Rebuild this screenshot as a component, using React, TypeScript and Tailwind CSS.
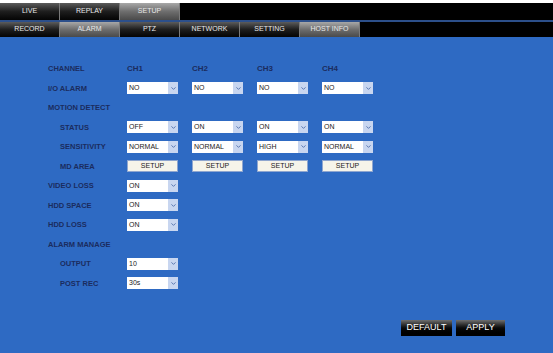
import { ChevronDown } from 'lucide-react';

const font = { fontFamily: '"Liberation Sans", Arial, sans-serif' };

type Tab = { label: string; active?: boolean };

const topTabs: Tab[] = [{ label: 'LIVE' }, { label: 'REPLAY' }, { label: 'SETUP', active: true }];
const subTabs: Tab[] = [
  { label: 'RECORD' },
  { label: 'ALARM', active: true },
  { label: 'PTZ' },
  { label: 'NETWORK' },
  { label: 'SETTING' },
  { label: 'HOST INFO', active: true },
];

function TabButton({ label, active }: Tab) {
  return (
    <div
      className={
        'flex w-[60px] items-center justify-center border-r border-[#7a7a7a] text-[7px] text-[#e8e8e8] ' +
        (active
          ? 'bg-gradient-to-b from-[#a8a8a8] via-[#6e6e6e] to-[#4a4a4a]'
          : 'bg-gradient-to-b from-[#5c5c5c] via-[#1e1e1e] to-[#050505]')
      }
    >
      {label}
    </div>
  );
}

function Select({ value }: { value: string }) {
  return (
    <div className="flex h-[12px] w-[51px] items-center justify-between bg-white pl-[2px] text-[7px] text-[#222]">
      <span>{value}</span>
      <span className="flex h-full w-[10px] items-center justify-center bg-[#c8d6f0]">
        <ChevronDown className="h-[7px] w-[7px] text-[#4a6aa8]" strokeWidth={3} />
      </span>
    </div>
  );
}

function SetupButton() {
  return (
    <div className="flex h-[12px] w-[51px] items-center justify-center border border-[#8fa6cf] bg-[#f6f4ea] text-[7px] text-[#222]">
      SETUP
    </div>
  );
}

function Row({ label, indent, children }: { label: string; indent?: boolean; children?: React.ReactNode }) {
  return (
    <div className="flex h-[19.5px] items-center">
      <div
        className={
          'w-[79px] shrink-0 text-[7.5px] font-bold text-[#1b2c5e] ' + (indent ? 'pl-[12px]' : '')
        }
      >
        {label}
      </div>
      <div className="flex gap-[14px]">{children}</div>
    </div>
  );
}

export default function App() {
  return (
    <div className="flex h-[353px] w-[553px] flex-col bg-white" style={font}>
      <div className="h-[3px]" />
      <div className="flex h-[17px] bg-black">
        {topTabs.map((t) => (
          <TabButton key={t.label} {...t} />
        ))}
      </div>
      <div className="h-[2px] bg-[#2c4f8a]" />
      <div className="flex h-[15px] bg-black">
        {subTabs.map((t) => (
          <TabButton key={t.label} {...t} />
        ))}
      </div>
      <div className="flex flex-1 flex-col bg-[#2e6ac3] pl-[48px] pt-[22px]">
        <Row label="CHANNEL">
          {['CH1', 'CH2', 'CH3', 'CH4'].map((c) => (
            <div key={c} className="w-[51px] text-[8px] font-bold text-[#1b2c5e]">
              {c}
            </div>
          ))}
        </Row>
        <Row label="I/O ALARM">
          {['NO', 'NO', 'NO', 'NO'].map((v, i) => (
            <Select key={i} value={v} />
          ))}
        </Row>
        <Row label="MOTION DETECT" />
        <Row label="STATUS" indent>
          {['OFF', 'ON', 'ON', 'ON'].map((v, i) => (
            <Select key={i} value={v} />
          ))}
        </Row>
        <Row label="SENSITIVITY" indent>
          {['NORMAL', 'NORMAL', 'HIGH', 'NORMAL'].map((v, i) => (
            <Select key={i} value={v} />
          ))}
        </Row>
        <Row label="MD AREA" indent>
          {[0, 1, 2, 3].map((i) => (
            <SetupButton key={i} />
          ))}
        </Row>
        <Row label="VIDEO LOSS">
          <Select value="ON" />
        </Row>
        <Row label="HDD SPACE">
          <Select value="ON" />
        </Row>
        <Row label="HDD LOSS">
          <Select value="ON" />
        </Row>
        <Row label="ALARM MANAGE" />
        <Row label="OUTPUT" indent>
          <Select value="10" />
        </Row>
        <Row label="POST REC" indent>
          <Select value="30s" />
        </Row>
        <div className="mt-[27px] flex gap-[4px] pl-[353px]">
          <div className="flex h-[16px] w-[51px] items-center justify-center bg-gradient-to-b from-[#707070] via-[#0a0a0a] to-black text-[9px] text-white">
            DEFAULT
          </div>
          <div className="flex h-[16px] w-[49px] items-center justify-center bg-gradient-to-b from-[#707070] via-[#0a0a0a] to-black text-[9px] text-white">
            APPLY
          </div>
        </div>
      </div>
    </div>
  );
}
